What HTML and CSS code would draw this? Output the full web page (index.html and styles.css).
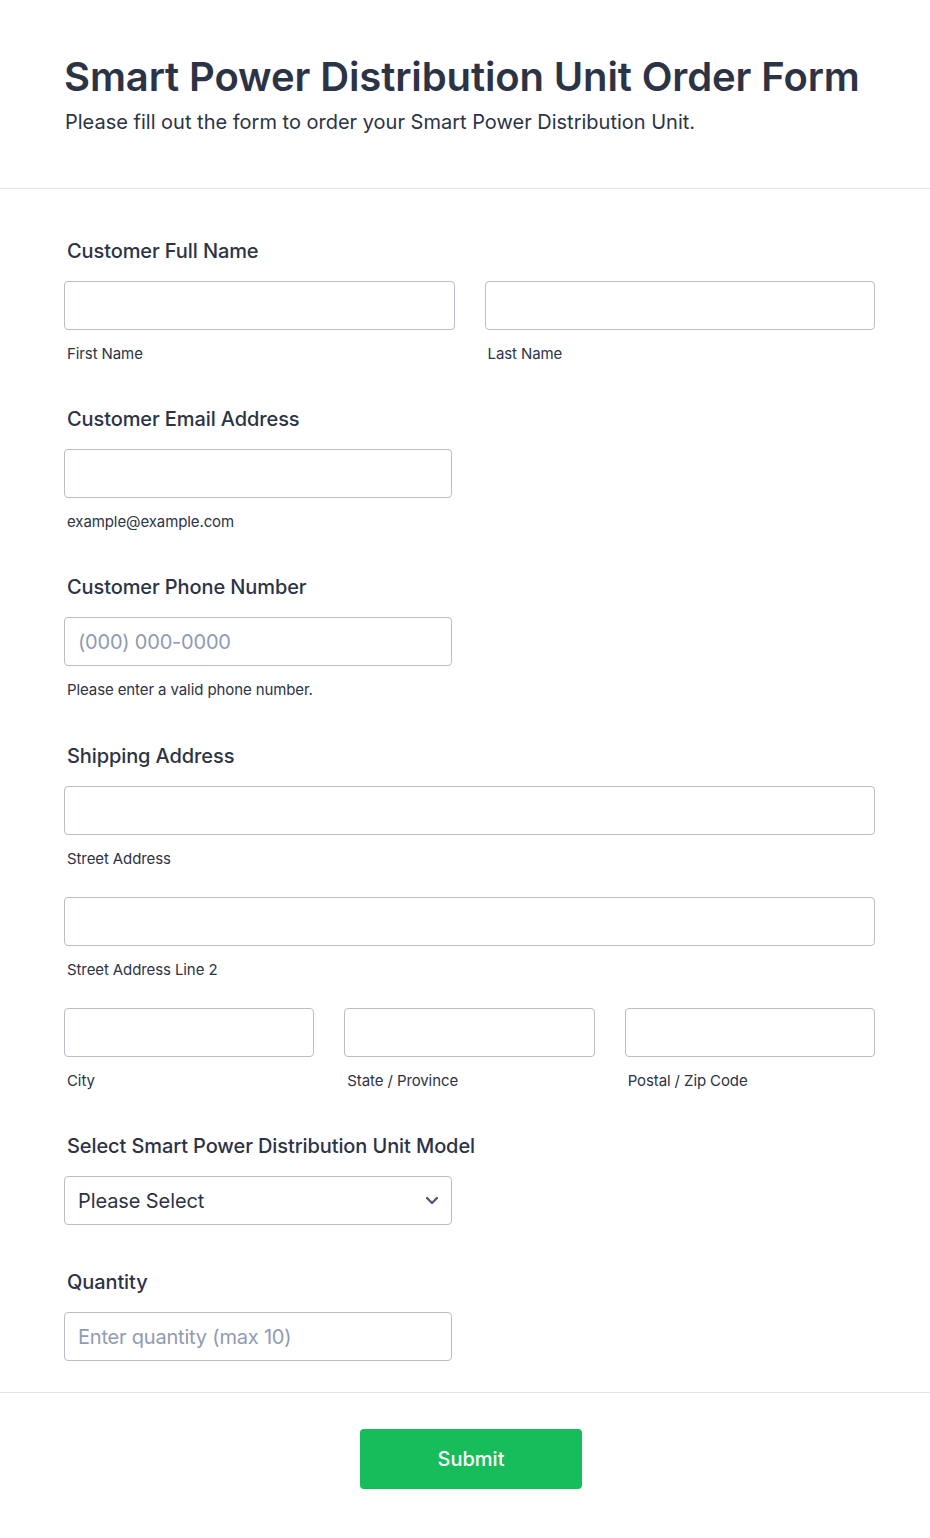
FILE: index.html
```html
<!DOCTYPE html>
<html lang="en">
<head>
<meta charset="utf-8">
<title>Smart Power Distribution Unit Order Form</title>
<link rel="stylesheet" href="styles.css">
</head>
<body>
<form class="form">
  <header class="form-header">
    <h1 class="title">Smart Power Distribution Unit Order Form</h1>
    <p class="subtitle">Please fill out the form to order your Smart Power Distribution Unit.</p>
  </header>

  <div class="form-body">
    <div class="field">
      <label class="field-label">Customer Full Name</label>
      <div class="cols-2">
        <div class="sub">
          <input class="input" type="text">
          <span class="sublabel">First Name</span>
        </div>
        <div class="sub">
          <input class="input" type="text">
          <span class="sublabel">Last Name</span>
        </div>
      </div>
    </div>

    <div class="field">
      <label class="field-label">Customer Email Address</label>
      <div class="sub half">
        <input class="input" type="email">
        <span class="sublabel">example@example.com</span>
      </div>
    </div>

    <div class="field field-wide">
      <label class="field-label">Customer Phone Number</label>
      <div class="sub half">
        <input class="input" type="tel" placeholder="(000) 000-0000">
        <span class="sublabel">Please enter a valid phone number.</span>
      </div>
    </div>

    <div class="field">
      <label class="field-label">Shipping Address</label>
      <div class="address">
        <div class="sub">
          <input class="input" type="text">
          <span class="sublabel">Street Address</span>
        </div>
        <div class="sub">
          <input class="input" type="text">
          <span class="sublabel">Street Address Line 2</span>
        </div>
        <div class="cols-3">
          <div class="sub">
            <input class="input" type="text">
            <span class="sublabel">City</span>
          </div>
          <div class="sub">
            <input class="input" type="text">
            <span class="sublabel">State / Province</span>
          </div>
          <div class="sub">
            <input class="input" type="text">
            <span class="sublabel">Postal / Zip Code</span>
          </div>
        </div>
      </div>
    </div>

    <div class="field field-nosub">
      <label class="field-label">Select Smart Power Distribution Unit Model</label>
      <div class="select half">
        <span class="select-text">Please Select</span>
        <svg class="chevron" width="14" height="9" viewBox="0 0 14 9" aria-hidden="true"><path d="M2 2l5 5 5-5" fill="none" stroke="#4d566e" stroke-width="2.2" stroke-linecap="round" stroke-linejoin="round"/></svg>
      </div>
    </div>

    <div class="field field-last">
      <label class="field-label">Quantity</label>
      <div class="half">
        <input class="input" type="text" placeholder="Enter quantity (max 10)">
      </div>
    </div>
  </div>

  <div class="form-footer">
    <button class="submit" type="button">Submit</button>
  </div>
</form>
</body>
</html>
```

FILE: styles.css
```css
* { box-sizing: border-box; }

html, body {
  margin: 0;
  padding: 0;
  background: #ffffff;
}

body {
  font-family: Inter, "Noto Sans", "Liberation Sans", sans-serif;
  color: #2c3345;
}

.form {
  width: 930px;
}

.form-header {
  padding: 53px 55px 54px 64px;
  border-bottom: 1px solid #e3e5eb;
}

.title {
  margin: 0;
  font-size: 40px;
  line-height: 48px;
  font-weight: 600;
  color: #2c3345;
  letter-spacing: -0.12px;
}

.subtitle {
  margin: 9px 0 0 1px;
  font-size: 20px;
  line-height: 24px;
  font-weight: 400;
  color: #2c3345;
}

.form-body {
  padding: 50px 55px 31px 64px;
  border-bottom: 1px solid #e3e5eb;
}

.field {
  margin-bottom: 44px;
}

.field-wide {
  margin-bottom: 45px;
}

.field-nosub {
  margin-bottom: 45px;
}

.field-last {
  margin-bottom: 0;
}

.field-label {
  display: block;
  margin: 0 0 18px 3px;
  font-size: 20px;
  line-height: 24px;
  font-weight: 500;
  letter-spacing: -0.1px;
  color: #2c3345;
}

.cols-2 {
  display: grid;
  grid-template-columns: 1fr 1fr;
  column-gap: 30px;
}

.cols-3 {
  display: grid;
  grid-template-columns: 1fr 1fr 1fr;
  column-gap: 30px;
}

.address {
  display: flex;
  flex-direction: column;
  gap: 29px;
}

.sub {
  display: flex;
  flex-direction: column;
}

.half {
  width: 388px;
}

.input {
  display: block;
  width: 100%;
  height: 49px;
  margin: 0;
  padding: 0 13px;
  border: 1px solid #b8bdc9;
  border-radius: 4px;
  background: #ffffff;
  font-family: inherit;
  font-size: 20px;
  letter-spacing: -0.2px;
  color: #2c3345;
  outline: none;
}

.input::placeholder {
  color: #8f9bb3;
  opacity: 1;
}

.sublabel {
  display: block;
  margin: 15px 0 0 3px;
  font-size: 15px;
  line-height: 18px;
  letter-spacing: -0.1px;
  color: #2c3345;
}

.select {
  display: flex;
  align-items: center;
  justify-content: space-between;
  height: 49px;
  padding: 0 12px 0 13px;
  border: 1px solid #b8bdc9;
  border-radius: 4px;
  background: #ffffff;
}

.select-text {
  font-size: 20px;
  line-height: 24px;
  letter-spacing: -0.1px;
  color: #2c3345;
}

.chevron {
  display: block;
}

.form-footer {
  display: flex;
  justify-content: center;
  padding: 36px 55px 49px 64px;
}

.submit {
  width: 222px;
  height: 60px;
  margin-left: 3px;
  border: none;
  border-radius: 4px;
  background: #18bd5b;
  color: #ffffff;
  font-family: inherit;
  font-size: 20px;
  font-weight: 500;
  cursor: pointer;
}
```
